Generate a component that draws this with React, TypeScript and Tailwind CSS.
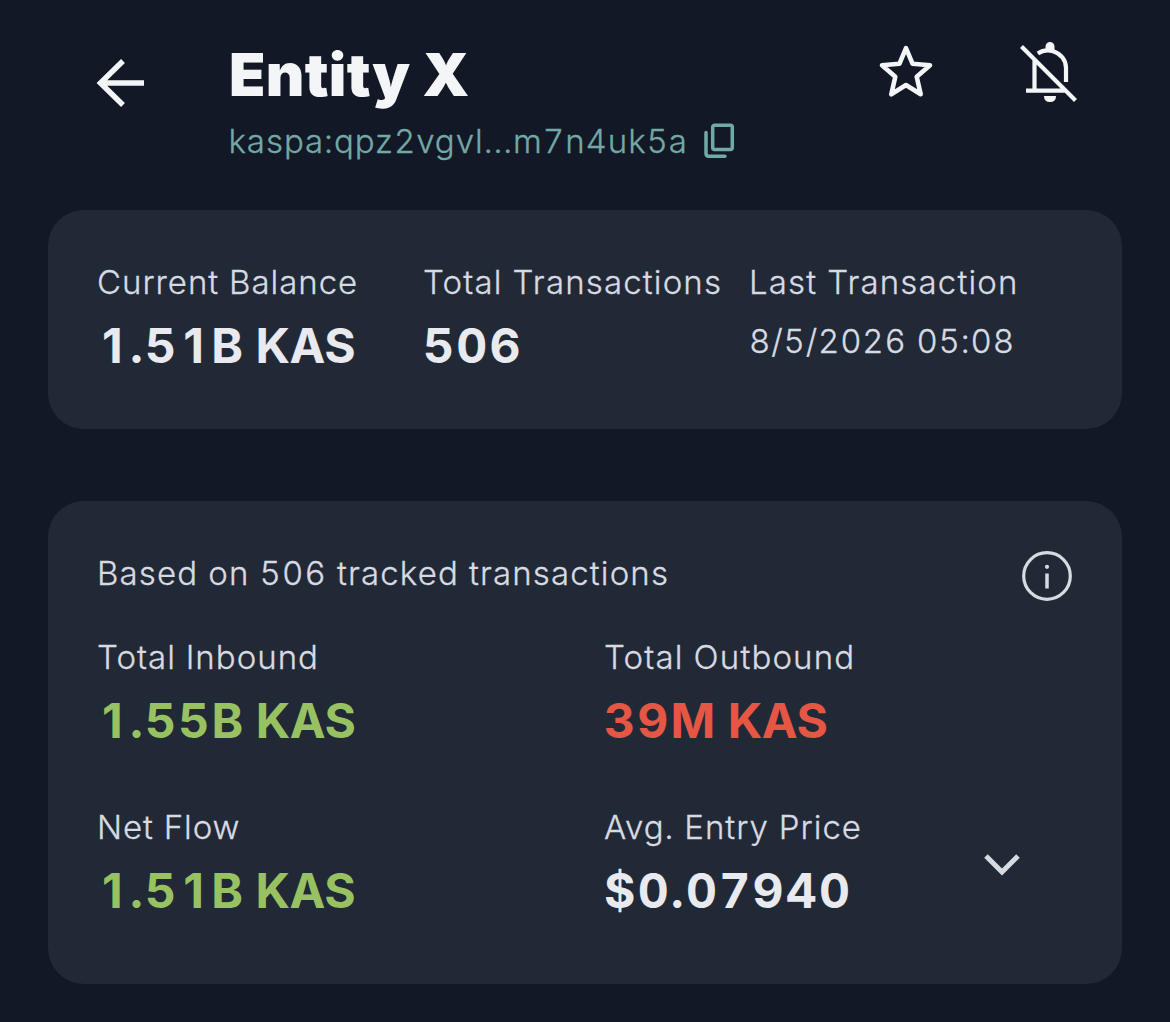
import React from "react";

type StatProps = { label: string; value: React.ReactNode; unit?: string; color?: string; labelClass?: string };

function Label({ children, className = "tracking-[1.15px]" }: { children: React.ReactNode; className?: string }) {
  return <div className={`text-[33px] leading-10 font-light whitespace-nowrap text-[#d8dae1] [-webkit-text-stroke:0.3px_currentColor] ${className}`}>{children}</div>;
}

// A plain "1" without its foot, padded to the width of the other digits.
function One() {
  return <span className="pr-[5px] pl-[5px] normal-nums">1</span>;
}

function Stat({ label, value, unit, color = "text-[#e9eaef]", labelClass }: StatProps) {
  return (
    <div>
      <Label className={labelClass}>{label}</Label>
      <div className={`mt-[14px] text-[48px] leading-[60px] font-bold tracking-[2.2px] whitespace-nowrap ${color}`}>
        {value}
        {unit && <span className="-ml-[2px] tracking-[-0.5px]"> {unit}</span>}
      </div>
    </div>
  );
}

export default function App() {
  return (
    <div className="h-[1022px] w-[1170px] overflow-hidden bg-[#121826] px-12 font-['Inter',sans-serif] tabular-nums">
      <header className="flex h-[210px] items-start">
        <svg className="mt-[58px] ml-12 h-[50px] w-[50px] shrink-0" viewBox="0 0 50 50" fill="none" stroke="#f4f5f7" strokeWidth="5.5">
          <path d="M27 3 4.500 25 27 47M4.500 25H48" />
        </svg>
        <div className="mt-[41px] ml-[83px] w-[649px] shrink-0">
          <h1 className="text-[59.5px] leading-[66px] font-black tracking-[0.3px] whitespace-nowrap text-[#f4f5f7] [word-spacing:-4px]">Entity X</h1>
          <div className="mt-[14px] flex items-center text-[#73a9a5]">
            <span className="-ml-[0.5px] w-[474.5px] text-[33px] leading-10 font-light tracking-[0.94px] whitespace-nowrap [-webkit-text-stroke:0.3px_currentColor]">kaspa:qpz2vgvl...m7n4uk5a</span>
            <svg className="h-9 w-8" viewBox="0 0 32 36" fill="none" stroke="currentColor" strokeWidth="3.5" strokeLinecap="round">
              <rect x="9.700" y="2.200" width="19.600" height="24.300" rx="2" />
              <path d="M3 9.500v21q0 2.700 2.700 2.700H22" />
            </svg>
          </div>
        </div>
        <svg className="mt-[44px] h-14 w-14 shrink-0" viewBox="0 0 56 56" fill="none" stroke="#f4f5f7" strokeWidth="4.600" strokeLinejoin="round">
          <path d="M28 4.200 34.500 19.700 52 21.200 38.700 32.800 42.700 50.300 28 41 13.300 50.300 17.300 32.800 4 21.200 21.500 19.700z" />
        </svg>
        <svg className="mt-10 ml-[84px] h-16 w-16 shrink-0" viewBox="0 0 64 64" fill="none" stroke="#f4f5f7" strokeWidth="4.200">
          <path d="M3.500 6.500 57.500 60.500M16.500 50V19M8 50.700h40M19.800 13.500C25 10 30 9.800 35 11.200 43 13.500 48 20 48 28v14" />
          <path d="M26 56h12q0 6-6 6t-6-6zM27.500 12V6.500a4.500 4.500 0 0 1 9 0V12z" fill="#f4f5f7" stroke="none" />
        </svg>
      </header>
      <section className="flex h-[219px] rounded-[36px] bg-[#222936] pt-[52px] pl-[49px]">
        <div className="w-[326px]"><Stat label="Current Balance" value={<><One />.5<One />B</>} unit="KAS" labelClass="tracking-[0.97px]" /></div>
        <div className="w-[326px]"><Stat label="Total Transactions" value="506" /></div>
        <div><Label>Last Transaction</Label><Label className="mt-[19px] tracking-[0.83px]">8/5/2026 05:08</Label></div>
      </section>
      <section className="mt-[72px] h-[483px] rounded-[36px] bg-[#222936] pt-[49px] pr-[49px] pl-[49px]">
        <div className="flex h-[87px] justify-between">
          <Label className="pt-[3px] tracking-[1.14px]">Based on 506 tracked transactions</Label>
          <svg className="h-[52px] w-[52px]" viewBox="0 0 52 52" fill="none" stroke="#d8dae1" strokeWidth="3.200">
            <circle cx="26" cy="26" r="23.300" /><path d="M26 23.500v15" strokeWidth="3.500" /><circle cx="26" cy="16.800" r="2.100" fill="#d8dae1" stroke="none" />
          </svg>
        </div>
        <div className="grid grid-cols-[507px_1fr] gap-y-[56px]">
          <Stat label="Total Inbound" value={<><One />.55B</>} unit="KAS" color="text-[#98c262]" labelClass="tracking-[1px]" />
          <Stat label="Total Outbound" value="39M" unit="KAS" color="text-[#e55645]" />
          <Stat label="Net Flow" value={<><One />.5<One />B</>} unit="KAS" color="text-[#98c262]" labelClass="tracking-[0.95px]" />
          <div className="flex justify-between">
            <Stat label="Avg. Entry Price" value="$0.07940" labelClass="tracking-[1px]" />
            <svg className="mt-[46px] mr-[53px] h-6 w-9" viewBox="0 0 36 24" fill="none" stroke="#d8dae1" strokeWidth="5"><path d="m2 3 16 16L34 3" /></svg>
          </div>
        </div>
      </section>
    </div>
  );
}
